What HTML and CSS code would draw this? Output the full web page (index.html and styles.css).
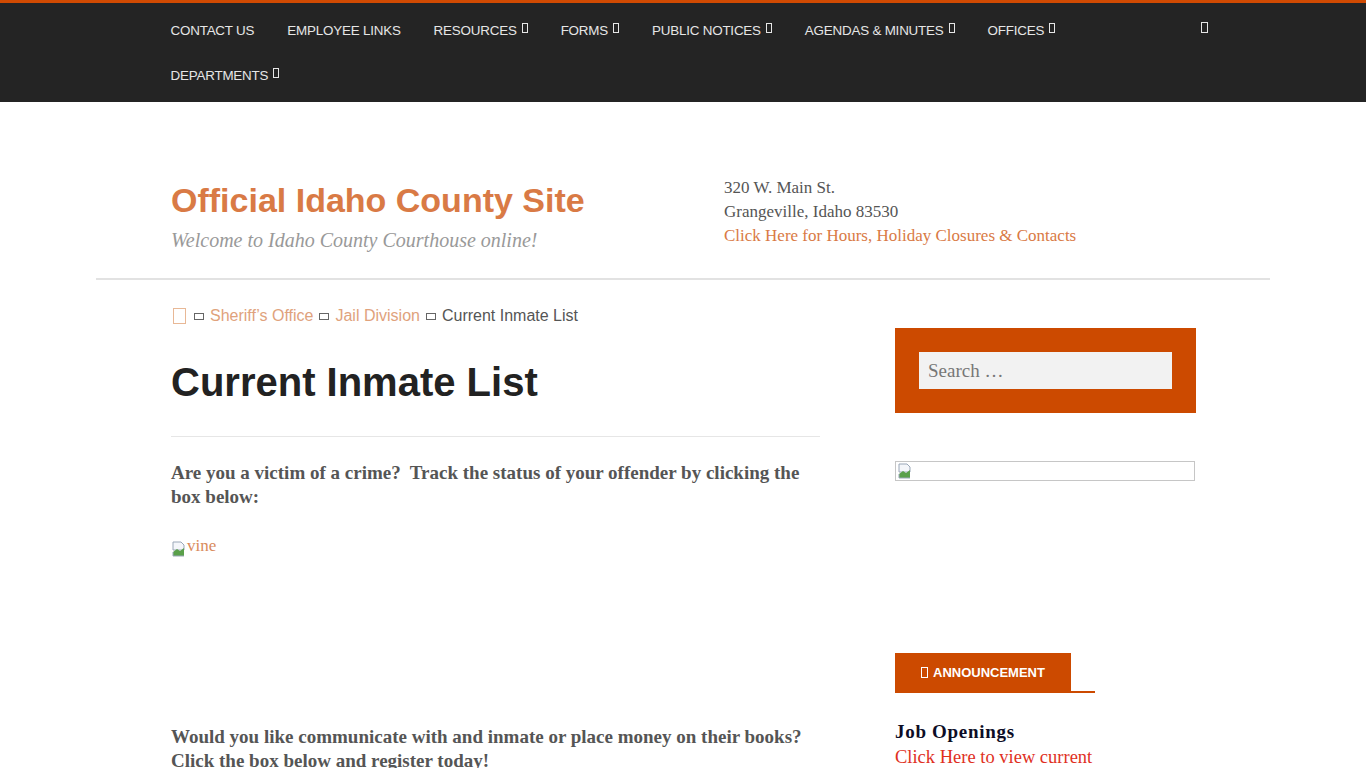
FILE: index.html
```html
<!DOCTYPE html>
<html lang="en">
<head>
<meta charset="utf-8">
<title>Current Inmate List</title>
<link rel="stylesheet" href="styles.css">
</head>
<body>
<header class="topbar">
  <div class="topbar-inner">
    <ul class="menu">
      <li><a href="#">CONTACT US</a></li>
      <li><a href="#">EMPLOYEE LINKS</a></li>
      <li><a href="#">RESOURCES <span class="gbox"></span></a></li>
      <li><a href="#">FORMS <span class="gbox"></span></a></li>
      <li><a href="#">PUBLIC NOTICES <span class="gbox"></span></a></li>
      <li><a href="#">AGENDAS &amp; MINUTES <span class="gbox"></span></a></li>
      <li><a href="#">OFFICES <span class="gbox"></span></a></li>
      <li><a href="#">DEPARTMENTS <span class="gbox"></span></a></li>
    </ul>
    <div class="nav-search"><span class="gbox big"></span></div>
  </div>
</header>

<div class="site">
  <div class="branding">
    <div class="brand-left">
      <div class="site-title">Official Idaho County Site</div>
      <div class="tagline">Welcome to Idaho County Courthouse online!</div>
    </div>
    <div class="brand-right">
      <div>320 W. Main St.</div>
      <div>Grangeville, Idaho 83530</div>
      <a href="#" class="hours">Click Here for Hours, Holiday Closures &amp; Contacts</a>
    </div>
  </div>

  <div class="columns">
    <main class="main">
      <nav class="crumbs">
        <span class="home-box"></span>
        <span class="sep"></span>
        <a href="#">Sheriff’s Office</a>
        <span class="sep"></span>
        <a href="#">Jail Division</a>
        <span class="sep"></span>
        <span class="current">Current Inmate List</span>
      </nav>
      <h1 class="page-title">Current Inmate List</h1>
      <div class="entry">
        <p class="strong">Are you a victim of a crime?&nbsp; Track the status of your offender by clicking the box below:</p>
        <p class="broken"><svg class="bimg" width="16" height="16" viewBox="0 0 16 16"><path d="M2 1h8l3 3v5H2z" fill="#f4f6fa" stroke="#9aa7b8" stroke-width="1"/><path d="M2 11l4-3 3 2 4-3v8H2z" fill="#5aa04a"/><path d="M2 11v4h11" fill="none" stroke="#9aa7b8"/></svg><span class="alt">vine</span></p>
        <p class="strong later">Would you like communicate with and inmate or place money on their books? Click the box below and register today!</p>
      </div>
    </main>

    <aside class="sidebar">
      <div class="search-widget">
        <div class="search-field">Search …</div>
      </div>
      <div class="img-widget">
        <svg class="bimg" width="16" height="16" viewBox="0 0 16 16"><path d="M2 1h8l3 3v5H2z" fill="#f4f6fa" stroke="#9aa7b8" stroke-width="1"/><path d="M2 11l4-3 3 2 4-3v8H2z" fill="#5aa04a"/><path d="M2 11v4h11" fill="none" stroke="#9aa7b8"/></svg>
      </div>
      <div class="tabs">
        <div class="tab"><span class="gbox white"></span> ANNOUNCEMENT</div>
      </div>
      <div class="announce">
        <div class="job">Job Openings</div>
        <a href="#" class="job-link">Click Here to view current</a>
      </div>
    </aside>
  </div>
</div>
</body>
</html>
```

FILE: styles.css
```css
* { box-sizing: border-box; }
html, body { margin: 0; padding: 0; }
body {
  background: #fff;
  font-family: "Liberation Serif", "DejaVu Serif", serif;
  color: #555;
}
a { text-decoration: none; }

.topbar {
  background: #242424;
  border-top: 3px solid #d04a02;
  height: 102px;
  padding-top: 5px;
}
.topbar-inner {
  width: 1025px;
  margin: 0 auto;
  display: flex;
  align-items: flex-start;
}
.menu {
  flex: 1;
  list-style: none;
  margin: 0;
  padding: 0;
  display: flex;
  flex-wrap: wrap;
  column-gap: 33px;
}
.menu li { height: 45px; display: flex; align-items: center; }
.menu a {
  color: #e6e6e6;
  font-family: "Liberation Sans", Arial, sans-serif;
  font-size: 13.4px;
  letter-spacing: -0.2px;
  display: flex;
  align-items: center;
  gap: 5px;
}
.gbox {
  display: inline-block;
  width: 6px;
  height: 10px;
  border: 1px solid #e6e6e6;
  margin-top: -6px;
}
.gbox.big { width: 7px; height: 11px; margin-top: 0; }
.gbox.white { border-color: #fff; width: 7px; height: 11px; margin-top: 0; }
.nav-search {
  width: 30px;
  height: 45px;
  display: flex;
  align-items: center;
  justify-content: flex-end;
  margin-right: -12px;
  padding-bottom: 6px;
}

.site {
  width: 1174px;
  margin: 0 auto;
}
.branding {
  display: flex;
  padding: 74px 75px 26px;
  border-bottom: 2px solid #e2e2e2;
}
.brand-left { width: 553px; padding-top: 3px; }
.site-title {
  font-family: "Liberation Sans", Arial, sans-serif;
  font-weight: bold;
  font-size: 34px;
  color: #d97a45;
  line-height: 42px;
}
.tagline {
  font-style: italic;
  font-size: 20px;
  color: #999;
  margin-top: 8px;
}
.brand-right {
  font-size: 17px;
  line-height: 24px;
  color: #555;
}
.brand-right .hours { color: #d97a45; }

.columns {
  display: flex;
  padding: 0 75px;
  gap: 75px;
}
.main { width: 649px; flex-shrink: 0; }
.sidebar { width: 300px; flex-shrink: 0; padding-top: 48px; }

.crumbs {
  display: flex;
  align-items: center;
  gap: 6px;
  font-family: "Liberation Sans", Arial, sans-serif;
  font-size: 16px;
  margin-top: 26px;
  height: 20px;
}
.crumbs a { color: #e0a27c; }
.crumbs .current { color: #555; }
.home-box {
  width: 13px;
  height: 16px;
  border: 1px solid #e8b896;
  margin-left: 2px;
  margin-right: 2px;
}
.sep {
  width: 10px;
  height: 7px;
  border: 1px solid #666;
  margin-top: 1px;
}
.page-title {
  font-family: "Liberation Sans", Arial, sans-serif;
  font-size: 40px;
  font-weight: bold;
  color: #222;
  margin: 32px 0 0;
  line-height: 48px;
  padding-bottom: 30px;
  border-bottom: 1px solid #e6e6e6;
}
.entry { padding-top: 24px; }
.entry p { margin: 0; }
.strong {
  font-weight: bold;
  font-size: 19px;
  line-height: 24px;
  color: #555;
}
.broken {
  margin-top: 24px !important;
  display: flex;
  align-items: flex-end;
  height: 24px;
  font-size: 17px;
  color: #d98a5c;
}
.bimg { display: block; }
.broken .alt { margin-bottom: 1px; }
.later { margin-top: 168px !important; }

.search-widget {
  background: #cc4a00;
  padding: 24px;
  width: 301px;
  height: 85px;
}
.search-field {
  background: #f2f2f2;
  height: 37px;
  padding: 8px 9px;
  font-size: 19px;
  color: #777;
  line-height: 22px;
}
.img-widget {
  margin-top: 48px;
  width: 300px;
  height: 20px;
  border: 1px solid #c6c6c6;
  padding: 1px;
}
.tabs {
  margin-top: 172px;
  width: 200px;
  border-bottom: 2px solid #cc4a00;
}
.tab {
  width: 176px;
  height: 38px;
  background: #cc4a00;
  color: #fff;
  font-family: "Liberation Sans", Arial, sans-serif;
  font-weight: bold;
  font-size: 13px;
  display: flex;
  align-items: center;
  padding-left: 26px;
  gap: 5px;
}
.announce { padding-top: 27px; }
.job {
  font-weight: bold;
  font-size: 19px;
  letter-spacing: 0.7px;
  color: #0d0d26;
  line-height: 24px;
}
.job-link {
  display: block;
  font-size: 18.5px;
  color: #e0301e;
  line-height: 26px;
}
```
